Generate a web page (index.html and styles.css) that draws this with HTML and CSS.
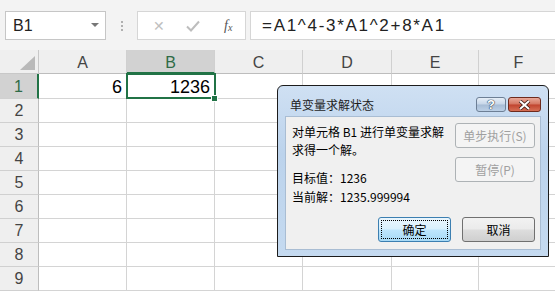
FILE: index.html
```html
<!DOCTYPE html>
<html lang="zh-CN">
<head>
    <meta charset="UTF-8">
    <title>单变量求解状态</title>
    <link rel="stylesheet" href="styles.css">
</head>
<body>
    <div class="toolbar">
        <div class="namebox">
            <span>B1</span>
            <span class="caret"></span>
        </div>
        <div class="grip"><i></i><i></i><i></i></div>
        <div class="fxbox">
            <span class="fx-cancel">&#x2715;</span>
            <svg class="fx-enter" width="14" height="12" viewBox="0 0 14 12"><path d="M1 6.5 L5 10.5 L13 1.5" fill="none" stroke="#bdbdbd" stroke-width="2"/></svg>
            <span class="fx-label">f<sub>x</sub></span>
        </div>
        <div class="formula">=A1^4-3*A1^2+8*A1</div>
    </div>

    <div class="sheet">
        <div class="corner"><span class="corner-tri"></span></div>
        <div class="col-head">A</div>
        <div class="col-head is-active">B</div>
        <div class="col-head">C</div>
        <div class="col-head">D</div>
        <div class="col-head">E</div>
        <div class="col-head">F</div>

        <div class="row-head is-active">1</div>
        <div class="cell num">6</div>
        <div class="cell num is-selected">1236</div>
        <div class="cell"></div><div class="cell"></div><div class="cell"></div><div class="cell"></div>

        <div class="row-head">2</div>
        <div class="cell"></div><div class="cell"></div><div class="cell"></div><div class="cell"></div><div class="cell"></div><div class="cell"></div>
        <div class="row-head">3</div>
        <div class="cell"></div><div class="cell"></div><div class="cell"></div><div class="cell"></div><div class="cell"></div><div class="cell"></div>
        <div class="row-head">4</div>
        <div class="cell"></div><div class="cell"></div><div class="cell"></div><div class="cell"></div><div class="cell"></div><div class="cell"></div>
        <div class="row-head">5</div>
        <div class="cell"></div><div class="cell"></div><div class="cell"></div><div class="cell"></div><div class="cell"></div><div class="cell"></div>
        <div class="row-head">6</div>
        <div class="cell"></div><div class="cell"></div><div class="cell"></div><div class="cell"></div><div class="cell"></div><div class="cell"></div>
        <div class="row-head">7</div>
        <div class="cell"></div><div class="cell"></div><div class="cell"></div><div class="cell"></div><div class="cell"></div><div class="cell"></div>
        <div class="row-head">8</div>
        <div class="cell"></div><div class="cell"></div><div class="cell"></div><div class="cell"></div><div class="cell"></div><div class="cell"></div>
        <div class="row-head">9</div>
        <div class="cell"></div><div class="cell"></div><div class="cell"></div><div class="cell"></div><div class="cell"></div><div class="cell"></div>
    </div>

    <div class="dialog">
        <div class="title-bar">
            <span class="title">单变量求解状态</span>
            <div class="caption-buttons">
                <span class="cap-btn cap-help">?</span>
                <span class="cap-btn cap-close">
                    <svg width="13" height="10" viewBox="0 0 13 10"><path d="M2 1 L11 9 M11 1 L2 9" stroke="#3b1a14" stroke-width="3.6"/><path d="M2 1 L11 9 M11 1 L2 9" stroke="#fff" stroke-width="2"/></svg>
                </span>
            </div>
        </div>
        <div class="client">
            <div class="client-top">
                <div class="message">
                    <p>对单元格 B1 进行单变量求解</p>
                    <p>求得一个解。</p>
                    <p class="result">目标值：1236</p>
                    <p class="result">当前解：1235.999994</p>
                </div>
                <div class="side-buttons">
                    <button type="button" class="win-btn" disabled>单步执行(S)</button>
                    <button type="button" class="win-btn" disabled>暂停(P)</button>
                </div>
            </div>
            <div class="client-bottom">
                <button type="button" class="win-btn win-btn-default"><span>确定</span></button>
                <button type="button" class="win-btn">取消</button>
            </div>
        </div>
    </div>
</body>
</html>
```

FILE: styles.css
```css
:root {
    --excel-green: #217346;
    --grid-color: #d4d4d4;
    --header-bg: #efefef;
    --header-active: #d2d2d2;
    --toolbar-bg: #f3f3f3;
    --dialog-frame: #c4d8ee;
    --dialog-client: #f0f0f0;
}
body {
    margin: 0;
    width: 555px;
    height: 292px;
    overflow: hidden;
    font-family: "Liberation Sans", Arial, sans-serif;
    background-color: #fff;
    color: #000;
    position: relative;
}
.toolbar {
    height: 50px;
    box-sizing: border-box;
    padding: 11px 0 0 5px;
    background-color: var(--toolbar-bg);
    display: flex;
    align-items: flex-start;
}
.namebox {
    width: 101px;
    height: 29px;
    box-sizing: border-box;
    border: 1px solid #c6c6c6;
    background-color: #fff;
    display: flex;
    align-items: center;
    justify-content: space-between;
    padding: 0 6px 0 7px;
    font-size: 16px;
    color: #222;
}
.caret {
    width: 0;
    height: 0;
    border-left: 4px solid transparent;
    border-right: 4px solid transparent;
    border-top: 4px solid #777;
    margin-bottom: 2px;
}
.grip {
    width: 31px;
    height: 29px;
    display: flex;
    flex-direction: column;
    align-items: center;
    justify-content: center;
    gap: 2px;
}
.grip i {
    width: 2px;
    height: 2px;
    background-color: #b0b0b0;
}
.fxbox {
    width: 109px;
    height: 29px;
    box-sizing: border-box;
    border: 1px solid #d6d6d6;
    background-color: #fff;
    display: flex;
    align-items: center;
    padding-left: 15px;
}
.fx-cancel {
    color: #c0c0c0;
    font-size: 14px;
    width: 33px;
}
.fx-enter {
    margin-left: 0;
}
.fx-label {
    margin-left: 24px;
    font-family: "Liberation Serif", serif;
    font-style: italic;
    font-size: 14px;
    color: #555;
}
.fx-label sub {
    font-size: 10px;
    vertical-align: baseline;
    position: relative;
    top: 1px;
}
.formula {
    flex: 1;
    height: 29px;
    box-sizing: border-box;
    margin-left: 4px;
    border: 1px solid #d6d6d6;
    border-right: none;
    background-color: #fff;
    padding-left: 11px;
    font-size: 17px;
    letter-spacing: 1.7px;
    line-height: 27px;
    color: #222;
    white-space: nowrap;
}
.sheet {
    display: grid;
    grid-template-columns: 39px 88px 88px 88px 89px 87px 80px;
    grid-template-rows: 24px 25px repeat(8, 24px);
}
.corner {
    background-color: var(--header-bg);
    border-right: 1px solid #c8c8c8;
    border-bottom: 1px solid #c8c8c8;
    position: relative;
}
.corner-tri {
    position: absolute;
    right: 3px;
    bottom: 3px;
    width: 0;
    height: 0;
    border-left: 15px solid transparent;
    border-bottom: 14px solid #b9b9b9;
}
.col-head,
.row-head {
    background-color: var(--header-bg);
    color: #444;
    font-size: 16px;
    display: flex;
    align-items: center;
    justify-content: center;
    box-sizing: border-box;
}
.col-head {
    border-right: 1px solid #d0d0d0;
    border-bottom: 1px solid #bdbdbd;
    padding-top: 3px;
}
.row-head {
    border-right: 1px solid #bdbdbd;
    border-bottom: 1px solid #d0d0d0;
    padding-top: 1px;
}
.col-head.is-active {
    background-color: var(--header-active);
    color: #2e6b47;
    border-bottom: 2px solid var(--excel-green);
}
.row-head.is-active {
    background-color: var(--header-active);
    color: #2e6b47;
    border-right: 2px solid var(--excel-green);
}
.cell {
    border-right: 1px solid var(--grid-color);
    border-bottom: 1px solid var(--grid-color);
    box-sizing: border-box;
    font-size: 18px;
    display: flex;
    align-items: center;
    justify-content: flex-end;
    padding: 2px 4px 0 0;
}
.cell.is-selected {
    position: relative;
}
.cell.is-selected::after {
    content: '';
    position: absolute;
    left: -1px;
    top: -1px;
    right: -2px;
    bottom: -1px;
    border: 2px solid var(--excel-green);
}
.cell.is-selected::before {
    content: '';
    position: absolute;
    right: -4px;
    bottom: -4px;
    width: 5px;
    height: 5px;
    background-color: var(--excel-green);
    border: 1px solid #fff;
    z-index: 1;
}
.dialog {
    position: absolute;
    left: 277px;
    top: 85px;
    width: 272px;
    height: 172px;
    box-sizing: border-box;
    border: 1px solid #1c1c1c;
    border-radius: 6px 6px 0 0;
    background: linear-gradient(180deg, #cfe0f3 0%, #bcd3ec 40%, #c5daf0 100%);
    padding: 0 7px 6px;
    display: flex;
    flex-direction: column;
    font-family: "Noto Sans CJK SC", "Microsoft YaHei", sans-serif;
    font-size: 12px;
    color: #000;
}
.title-bar {
    height: 30px;
    flex: none;
    display: flex;
    justify-content: space-between;
    align-items: flex-start;
}
.title {
    margin: 10px 0 0 5px;
    line-height: 18px;
    color: #1e1e1e;
}
.caption-buttons {
    display: flex;
    gap: 2px;
    margin-top: 11px;
}
.cap-btn {
    height: 15px;
    box-sizing: border-box;
    border: 1px solid #6d7f95;
    border-radius: 3px;
    display: flex;
    align-items: center;
    justify-content: center;
}
.cap-help {
    width: 30px;
    background: linear-gradient(180deg, #e6eef7 0%, #c6d6e8 48%, #a6bcd5 52%, #bcd0e6 100%);
    color: #fff;
    font-family: "Liberation Sans", Arial, sans-serif;
    font-weight: bold;
    font-size: 13px;
    text-shadow: 0 0 1px #2c3e55, 0 0 1px #2c3e55, 0 0 1px #2c3e55;
}
.cap-close {
    width: 33px;
    border-color: #6e2a1d;
    background: linear-gradient(180deg, #e9a99a 0%, #d47560 48%, #c0432e 52%, #d66f55 100%);
}
.client {
    flex: 1;
    background-color: var(--dialog-client);
    border: 1px solid #a9bdd3;
    box-sizing: border-box;
    padding: 6px 5px 7px 6px;
    display: flex;
    flex-direction: column;
}
.client-top {
    display: flex;
    justify-content: space-between;
}
.message p {
    margin: 0;
    line-height: 18px;
}
.message .result {
    line-height: 19px;
}
.message p:nth-child(3) {
    margin-top: 9px;
}
.side-buttons {
    display: flex;
    flex-direction: column;
    gap: 9px;
}
.win-btn {
    width: 80px;
    height: 25px;
    box-sizing: border-box;
    border: 1px solid #707070;
    border-radius: 3px;
    background: linear-gradient(180deg, #f2f2f2 0%, #ebebeb 48%, #dddddd 52%, #cfcfcf 100%);
    font-family: inherit;
    font-size: 12px;
    color: #000;
    padding: 0;
}
.win-btn:disabled {
    background: #f4f4f4;
    border-color: #adb2b5;
    color: #a0a0a0;
}
.client-bottom {
    margin-top: auto;
    display: flex;
    justify-content: flex-end;
    gap: 11px;
}
.client-bottom .win-btn {
    width: 73px;
}
.win-btn-default {
    width: 74px;
    border-color: #3c7fb1;
    background: linear-gradient(180deg, #eaf6fd 0%, #d9f0fc 48%, #bee6fd 52%, #a7d9f5 100%);
    padding: 2px;
}
.win-btn-default span {
    display: flex;
    align-items: center;
    justify-content: center;
    height: 100%;
    border: 1px dotted #000;
    box-sizing: border-box;
}
```
